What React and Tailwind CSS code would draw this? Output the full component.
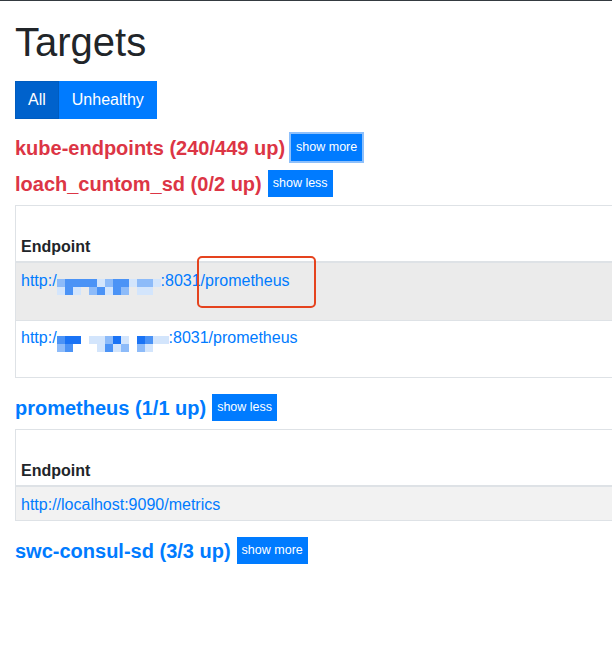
import React from "react";

// Pixelated-out part of the address, as two rows of tinted cells per column.
const TINT = {
  W: "bg-transparent",
  L: "bg-[#d3e5fc]",
  M: "bg-[#8dbbf9]",
  B: "bg-[#4b93f6]",
  D: "bg-[#1a73f5]",
};

const MOSAIC_A = ["ML", "BB", "BL", "BW", "BM", "LB", "ML", "BB", "BM", "LW", "ML", "ML", "LW"];
const MOSAIC_B = ["BM", "DB", "DW", "WW", "LW", "LL", "MB", "DL", "LM", "WW", "DM", "BL", "LW", "LW"];

function Mosaic({ cols }) {
  return (
    <span className="inline-flex h-4 flex-row align-[-1px]">
      {cols.map((c, i) => (
        <span key={i} className="flex w-2 flex-col">
          <span className={`h-2 w-2 ${TINT[c[0]]}`} />
          <span className={`h-2 w-2 ${TINT[c[1]]}`} />
        </span>
      ))}
    </span>
  );
}

function SmallButton({ children, focused }) {
  return (
    <button
      className={`h-[27px] bg-[#007bff] px-[5px] text-[12.5px] leading-[19px] text-white ${
        focused ? "ring-2 ring-[#8ec0fb]" : ""
      }`}
    >
      {children}
    </button>
  );
}

function PoolHeading({ name, up, total, healthy, label, focused, className = "" }) {
  return (
    <div className={`flex h-[27px] items-center gap-[6px] ${className}`}>
      <a
        className={`text-[20px] leading-6 font-bold ${
          healthy ? "text-[#007bff]" : "text-[#dc3545]"
        }`}
      >
        {name} ({up}/{total} up)
      </a>
      <SmallButton focused={focused}>{label}</SmallButton>
    </div>
  );
}

function EndpointTable({ children, className = "" }) {
  return (
    <div className={`relative w-[640px] border border-[#dee2e6] ${className}`}>
      <div className="flex h-[57px] items-end border-b-2 border-[#dee2e6] px-[5px] pb-[2px] text-base leading-6 font-bold text-[#212529]">
        Endpoint
      </div>
      {children}
    </div>
  );
}

export default function App() {
  return (
    <div
      className="min-h-[671px] w-full overflow-hidden border-t border-[#343a40] bg-white px-[15px] text-[#212529]"
      style={{ fontFamily: "'Liberation Sans', Arial, sans-serif" }}
    >
      <h1 className="mt-[17px] text-[40px] leading-[48px] font-medium">Targets</h1>

      <div className="mt-[15px] flex">
        <button className="border border-[#005cbf] bg-[#0062cc] px-3 py-[6px] text-base leading-6 text-white">
          All
        </button>
        <button className="border border-[#007bff] bg-[#007bff] px-3 py-[6px] text-base leading-6 text-white">
          Unhealthy
        </button>
      </div>

      <PoolHeading className="mt-[15px]" name="kube-endpoints" up={240} total={449} label="show more" focused />
      <PoolHeading className="mt-[9px]" name="loach_cuntom_sd" up={0} total={2} label="show less" />

      <EndpointTable className="mt-[8px]">
        <div className="h-[57px] bg-[#ebebeb] px-[5px] pt-[6px] text-base leading-6 text-[#007bff]">
          http:/<Mosaic cols={MOSAIC_A} />:8031/prometheus
        </div>
        <div className="h-[57px] border-t border-[#dee2e6] px-[5px] pt-[5px] text-base leading-6 text-[#007bff]">
          http:/<Mosaic cols={MOSAIC_B} />:8031/prometheus
        </div>
        {/* annotation drawn over the screenshot */}
        <div className="absolute top-[50px] left-[181px] h-[52px] w-[119px] rounded-[5px] border-2 border-[#e5431e]" />
      </EndpointTable>

      <PoolHeading className="mt-[16px]" name="prometheus" up={1} total={1} label="show less" healthy />

      <EndpointTable className="mt-[8px]">
        <div className="h-[33px] bg-[#f2f2f2] px-[5px] pt-[6px] text-base leading-6 text-[#007bff]">
          http://localhost:9090/metrics
        </div>
      </EndpointTable>

      <PoolHeading className="mt-[16px]" name="swc-consul-sd" up={3} total={3} label="show more" healthy />
    </div>
  );
}
